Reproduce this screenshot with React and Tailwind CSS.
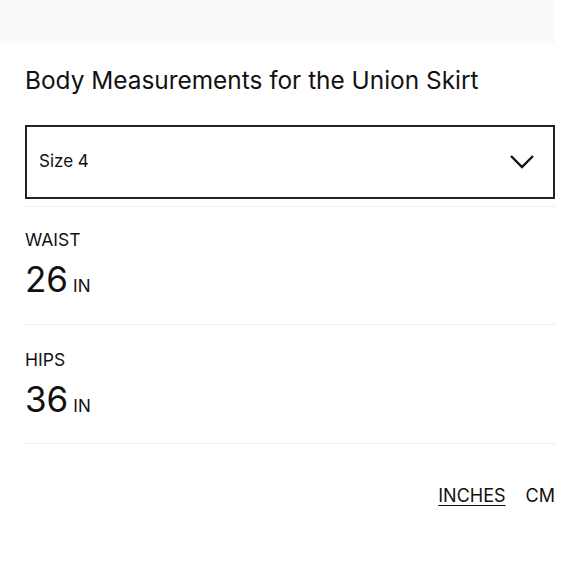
export default function App() {
  const font = { fontFamily: "Inter, 'Liberation Sans', sans-serif" };
  return (
    <div className="w-[580px] h-[580px] bg-white text-[#111] overflow-hidden relative" style={font}>
      <div className="h-[43px] w-[555px] bg-[#fafafa]" />
      <div className="px-[25px]">
        <h1 className="mt-[22px] text-[24.4px] leading-[30px] font-normal text-[#111]">
          Body Measurements for the Union Skirt
        </h1>
        <div className="mt-[30px] h-[74px] border-2 border-[#222] flex items-center justify-between pl-[12px] pr-[18px]">
          <span className="text-[17px]">Size 4</span>
          <svg width="26" height="16" viewBox="0 0 26 16" fill="none" stroke="#111" strokeWidth="2.4">
            <path d="M2 2 L13 13 L24 2" />
          </svg>
        </div>
        <div className="mt-[7px] h-px bg-[#efefef]" />
        <div className="pt-[22px] pb-[24px]">
          <div className="text-[17.5px] leading-[22px] uppercase">Waist</div>
          <div className="mt-[8px] flex items-baseline gap-[5px]">
            <span className="text-[35px] leading-[40px]">26</span>
            <span className="text-[17px] uppercase">in</span>
          </div>
        </div>
        <div className="h-px bg-[#efefef]" />
        <div className="pt-[24px] pb-[24px]">
          <div className="text-[17.5px] leading-[22px] uppercase">Hips</div>
          <div className="mt-[8px] flex items-baseline gap-[5px]">
            <span className="text-[35px] leading-[40px]">36</span>
            <span className="text-[17px] uppercase">in</span>
          </div>
        </div>
        <div className="h-px bg-[#efefef]" />
        <div className="mt-[38px] flex justify-end gap-[20px] text-[18px]">
          <span className="underline underline-offset-[3px]">INCHES</span>
          <span>CM</span>
        </div>
      </div>
    </div>
  );
}
